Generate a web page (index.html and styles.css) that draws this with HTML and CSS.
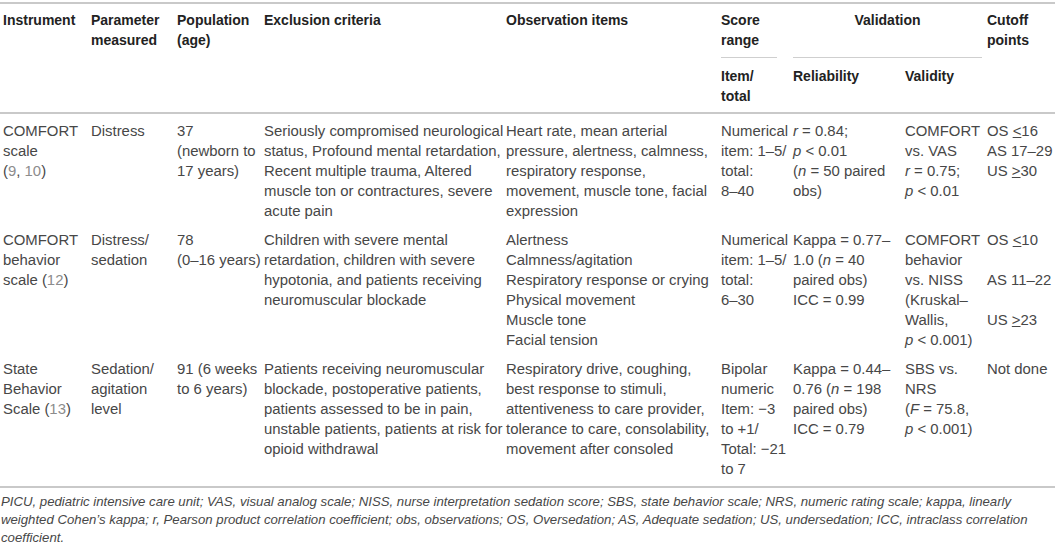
FILE: index.html
```html
<!DOCTYPE html>
<html lang="en">
<head>
<meta charset="utf-8">
<title>Sedation scales table</title>
<link rel="stylesheet" href="styles.css">
</head>
<body>
<div class="page">
<table class="scales">
  <colgroup>
    <col class="c1"><col class="c2"><col class="c3"><col class="c4"><col class="c5"><col class="c6"><col class="c7"><col class="c8"><col class="c9">
  </colgroup>
  <thead>
    <tr class="h1">
      <th rowspan="2" class="first">Instrument</th>
      <th rowspan="2">Parameter<br>measured</th>
      <th rowspan="2">Population<br>(age)</th>
      <th rowspan="2">Exclusion criteria</th>
      <th rowspan="2">Observation items</th>
      <th class="grp score"><div class="rule">Score<br>range</div></th>
      <th class="grp valid" colspan="2"><div class="rule center">Validation</div></th>
      <th rowspan="2">Cutoff<br>points</th>
    </tr>
    <tr class="h2">
      <th>Item/<br>total</th>
      <th>Reliability</th>
      <th>Validity</th>
    </tr>
  </thead>
  <tbody>
    <tr>
      <td class="first">COMFORT<br>scale<br>(<span class="ref">9</span>, <span class="ref">10</span>)</td>
      <td>Distress</td>
      <td>37<br>(newborn to<br>17 years)</td>
      <td>Seriously compromised neurological<br>status, Profound mental retardation,<br>Recent multiple trauma, Altered<br>muscle ton or contractures, severe<br>acute pain</td>
      <td>Heart rate, mean arterial<br>pressure, alertness, calmness,<br>respiratory response,<br>movement, muscle tone, facial<br>expression</td>
      <td>Numerical<br>item: 1–5/<br>total:<br>8–40</td>
      <td><i>r</i> = 0.84;<br><i>p</i> &lt; 0.01<br>(<i>n</i> = 50 paired<br>obs)</td>
      <td>COMFORT<br>vs. VAS<br><i>r</i> = 0.75;<br><i>p</i> &lt; 0.01</td>
      <td>OS <u>&lt;</u>16<br>AS 17–29<br>US <u>&gt;</u>30</td>
    </tr>
    <tr>
      <td class="first">COMFORT<br>behavior<br>scale (<span class="ref">12</span>)</td>
      <td>Distress/<br>sedation</td>
      <td>78<br>(0–16 years)</td>
      <td>Children with severe mental<br>retardation, children with severe<br>hypotonia, and patients receiving<br>neuromuscular blockade</td>
      <td>Alertness<br>Calmness/agitation<br>Respiratory response or crying<br>Physical movement<br>Muscle tone<br>Facial tension</td>
      <td>Numerical<br>item: 1–5/<br>total:<br>6–30</td>
      <td>Kappa = 0.77–<br>1.0 (<i>n</i> = 40<br>paired obs)<br>ICC = 0.99</td>
      <td>COMFORT<br>behavior<br>vs. NISS<br>(Kruskal–<br>Wallis,<br><i>p</i> &lt; 0.001)</td>
      <td>OS <u>&lt;</u>10<br>&nbsp;<br>AS 11–22<br>&nbsp;<br>US <u>&gt;</u>23</td>
    </tr>
    <tr class="last">
      <td class="first">State<br>Behavior<br>Scale (<span class="ref">13</span>)</td>
      <td>Sedation/<br>agitation<br>level</td>
      <td>91 (6 weeks<br>to 6 years)</td>
      <td>Patients receiving neuromuscular<br>blockade, postoperative patients,<br>patients assessed to be in pain,<br>unstable patients, patients at risk for<br>opioid withdrawal</td>
      <td>Respiratory drive, coughing,<br>best response to stimuli,<br>attentiveness to care provider,<br>tolerance to care, consolability,<br>movement after consoled</td>
      <td>Bipolar<br>numeric<br>Item: −3<br>to +1/<br>Total: −21<br>to 7</td>
      <td>Kappa = 0.44–<br>0.76 (<i>n</i> = 198<br>paired obs)<br>ICC = 0.79</td>
      <td>SBS vs.<br>NRS<br>(<i>F</i> = 75.8,<br><i>p</i> &lt; 0.001)</td>
      <td>Not done</td>
    </tr>
  </tbody>
</table>
<p class="note">PICU, pediatric intensive care unit; VAS, visual analog scale; NISS, nurse interpretation sedation score; SBS, state behavior scale; NRS, numeric rating scale; kappa, linearly<br>weighted Cohen’s kappa; r, Pearson product correlation coefficient; obs, observations; OS, Oversedation; AS, Adequate sedation; US, undersedation; ICC, intraclass correlation<br>coefficient.</p>
</div>
</body>
</html>
```

FILE: styles.css
```css
html, body {
  margin: 0;
  padding: 0;
  background: #ffffff;
}

.page {
  padding-top: 2px;
  font-family: "Liberation Sans", Arial, Helvetica, sans-serif;
  color: #474747;
}

.scales {
  width: 1055px;
  table-layout: fixed;
  border-collapse: separate;
  border-spacing: 0;
  border-top: 2px solid #c9c9c9;
}

.c1 { width: 91px; }
.c2 { width: 86px; }
.c3 { width: 87px; }
.c4 { width: 242px; }
.c5 { width: 215px; }
.c6 { width: 72px; }
.c7 { width: 112px; }
.c8 { width: 82px; }
.c9 { width: 68px; }

.scales th,
.scales td {
  text-align: left;
  vertical-align: top;
  padding: 0;
  white-space: nowrap;
  line-height: 20px;
}

.scales th {
  font-size: 14px;
  font-weight: bold;
  color: #222222;
}

.scales td {
  font-size: 14.9px;
}

.scales .first {
  padding-left: 3px;
}

.h1 th {
  padding-top: 6px;
  border-bottom: 2px solid #c9c9c9;
}

.h1 th.grp {
  border-bottom: none;
  padding-bottom: 0;
}

.h1 th.score {
  padding-right: 16px;
}

.h1 th.valid {
  padding-right: 5px;
}

.rule {
  padding-bottom: 7px;
  border-bottom: 1px solid #cfcfcf;
}

.rule.center {
  text-align: center;
  padding-bottom: 27px;
}

.h2 th {
  padding-top: 8px;
  padding-bottom: 6px;
  border-bottom: 2px solid #c9c9c9;
}

.scales tbody td {
  padding-top: 4px;
  padding-bottom: 5px;
}

.scales tbody tr:first-child td {
  padding-top: 7px;
}

.scales tbody tr.last td {
  padding-bottom: 7px;
  border-bottom: 2px solid #c9c9c9;
}

.ref {
  color: #8c8c8c;
}

.scales i {
  font-style: italic;
}

.scales u {
  text-decoration: underline;
  text-underline-offset: 1px;
}

.note {
  margin: 5px 0 0 1px;
  font-size: 13.2px;
  line-height: 18px;
  font-style: italic;
  color: #474747;
}
```
